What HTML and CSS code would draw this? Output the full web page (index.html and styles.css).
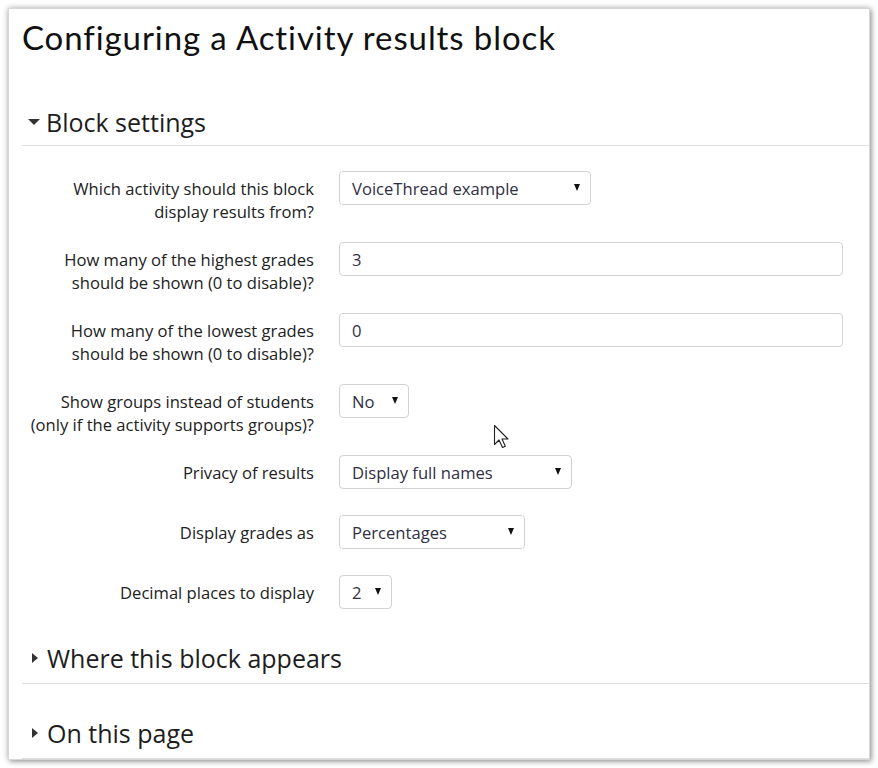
FILE: index.html
```html
<!DOCTYPE html>
<html lang="en">
<head>
<meta charset="utf-8">
<title>Configuring a Activity results block</title>
<link rel="stylesheet" href="styles.css">
</head>
<body>
<div class="panel">
  <h1 class="title">Configuring a Activity results block</h1>

  <section class="section first">
    <h2 class="legend"><i class="tri-down"></i>Block settings</h2>
    <div class="form">
      <div class="row">
        <label class="label">Which activity should this block<br>display results from?</label>
        <div class="control"><div class="select w-activity"><span>VoiceThread example</span><i class="caret"></i></div></div>
      </div>
      <div class="row">
        <label class="label">How many of the highest grades<br>should be shown (0 to disable)?</label>
        <div class="control"><input class="text" type="text" value="3"></div>
      </div>
      <div class="row">
        <label class="label">How many of the lowest grades<br>should be shown (0 to disable)?</label>
        <div class="control"><input class="text" type="text" value="0"></div>
      </div>
      <div class="row">
        <label class="label">Show groups instead of students<br>(only if the activity supports groups)?</label>
        <div class="control"><div class="select w-groups"><span>No</span><i class="caret"></i></div></div>
      </div>
      <div class="row">
        <label class="label">Privacy of results</label>
        <div class="control"><div class="select w-privacy"><span>Display full names</span><i class="caret"></i></div></div>
      </div>
      <div class="row">
        <label class="label">Display grades as</label>
        <div class="control"><div class="select w-grades"><span>Percentages</span><i class="caret"></i></div></div>
      </div>
      <div class="row">
        <label class="label">Decimal places to display</label>
        <div class="control"><div class="select w-decimal"><span>2</span><i class="caret"></i></div></div>
      </div>
    </div>
  </section>

  <section class="section">
    <h2 class="legend collapsed"><i class="tri-right"></i>Where this block appears</h2>
  </section>

  <section class="section">
    <h2 class="legend collapsed"><i class="tri-right"></i>On this page</h2>
  </section>

  <svg class="cursor" width="20" height="28" viewBox="0 0 20 28" aria-hidden="true">
    <path d="M1.5 1.5 L1.5 20.5 L6 16 L9.5 23.5 L12.3 22.3 L9 15 L15 15 Z" fill="#fff" stroke="#222" stroke-width="1.1" stroke-linejoin="round"/>
  </svg>
</div>
</body>
</html>
```
FILE: styles.css
```css
* { box-sizing: border-box; }

html, body {
  margin: 0;
  padding: 0;
  background: #ffffff;
}

body {
  font-family: "Open Sans", "Noto Sans", sans-serif;
  color: #373a3c;
}

.panel {
  position: relative;
  margin: 8px;
  width: 862px;
  height: 752px;
  background: #fff;
  border: 1px solid #d6d6d6;
  box-shadow: 0 0 6px rgba(0, 0, 0, 0.28), 2px 2px 5px rgba(0, 0, 0, 0.25);
  padding: 8px 0 0 13px;
  overflow: hidden;
}

.title {
  margin: 0;
  font-family: "Lato", "Noto Sans", sans-serif;
  font-weight: 400;
  font-size: 33px;
  letter-spacing: 0.9px;
  line-height: 40px;
  color: #111;
}

.section { margin-top: 32px; }
.section.first { margin-top: 48px; }

.legend {
  margin: 0;
  display: flex;
  align-items: center;
  font-weight: 400;
  font-size: 25px;
  line-height: 34px;
  color: #1d1d1d;
  padding-bottom: 6px;
  border-bottom: 1px solid #e0e0e0;
}

.legend.collapsed { padding-bottom: 8px; }

.tri-down {
  width: 0;
  height: 0;
  margin: 0 6px 0 6px;
  border-left: 6.5px solid transparent;
  border-right: 6.5px solid transparent;
  border-top: 6px solid #333;
}

.tri-right {
  width: 0;
  height: 0;
  margin: 0 9px 0 10px;
  border-top: 5.5px solid transparent;
  border-bottom: 5.5px solid transparent;
  border-left: 6px solid #333;
}

.form { margin-top: 25px; }

.row {
  display: flex;
  min-height: 41px;
  margin-bottom: 19px;
}
.row:last-child {
  min-height: 34px;
  margin-bottom: 0;
}

.label {
  width: 292px;
  flex: none;
  text-align: right;
  padding-top: 6px;
  font-size: 16.6px;
  line-height: 23px;
  color: #222;
}

.control {
  margin-left: 25px;
}

.select, .text {
  height: 34px;
  border: 1px solid #d2d2d2;
  border-radius: 4px;
  background: #fff;
  font-family: "Open Sans", "Noto Sans", sans-serif;
  font-size: 16.6px;
  color: #2f2f45;
}

.select {
  display: flex;
  align-items: center;
  justify-content: space-between;
  padding: 0 10px 0 12px;
}

.caret {
  width: 0;
  height: 0;
  border-left: 3.5px solid transparent;
  border-right: 3.5px solid transparent;
  border-top: 7px solid #111;
  margin-top: -2px;
}

.w-activity { width: 252px; }
.w-groups { width: 70px; }
.w-privacy { width: 233px; }
.w-grades { width: 186px; }
.w-decimal { width: 53px; }

.text {
  width: 504px;
  padding: 0 12px;
  outline: none;
}

.cursor {
  position: absolute;
  left: 484px;
  top: 415px;
}
```
